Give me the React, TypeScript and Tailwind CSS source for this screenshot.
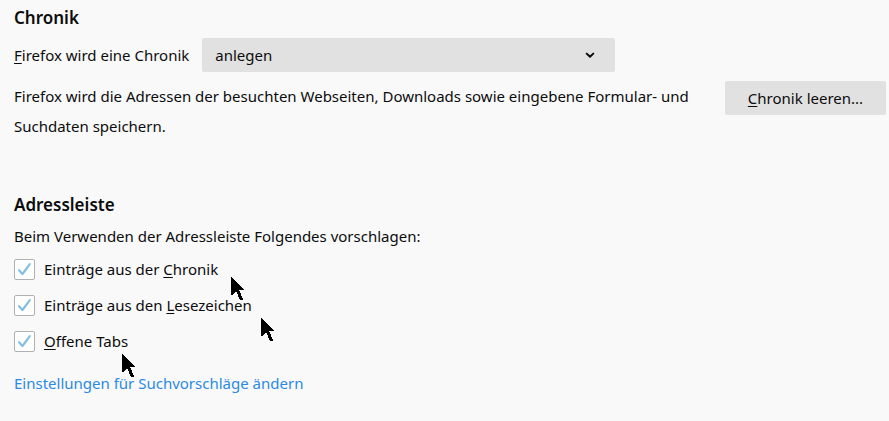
import React from "react";

const suggestions = [
  { id: "history", before: "Einträge aus der ", key: "C", after: "hronik" },
  { id: "bookmarks", before: "Einträge aus den ", key: "L", after: "esezeichen" },
  { id: "tabs", before: "", key: "O", after: "ffene Tabs" },
];

const pointerPlaces: Record<string, string> = {
  history: "left-[217px] top-[26px]",
  bookmarks: "left-[247px] top-[31px]",
  tabs: "left-[108px] top-[31px]",
};

const AccessKey: React.FC<{ children: string }> = ({ children }) => (
  <span className="underline decoration-1 underline-offset-2">{children}</span>
);

const Pointer: React.FC<{ className: string }> = ({ className }) => (
  <svg
    className={`absolute pointer-events-none ${className}`}
    width="14"
    height="24"
    viewBox="0 0 14 24"
    shapeRendering="crispEdges"
    aria-hidden="true"
  >
    <path d="M0 0L13 12V13H8L12 22V23H9L5 14L1 18H0Z" fill="#000" />
  </svg>
);

const App: React.FC = () => {
  return (
    <main className="min-h-screen bg-[#f9f9f9] pl-3.5 pr-[3px] pt-1 pb-5 font-['Noto_Sans','Open_Sans',sans-serif] text-[15px] leading-[30px] text-[#0c0c0d]">
      <section>
        <h2 className="text-[17px] leading-7 font-semibold">Chronik</h2>
        <div className="mt-1.5 flex items-center gap-[13px]">
          <label htmlFor="historyMode" className="whitespace-nowrap">
            <AccessKey>F</AccessKey>irefox wird eine Chronik
          </label>
          <div className="relative w-[413px]">
            <select
              id="historyMode"
              className="block h-[34px] w-full appearance-none rounded-xs bg-[#e1e1e1] px-[13px]"
            >
              <option>anlegen</option>
            </select>
            <svg
              className="pointer-events-none absolute right-5 top-3.5"
              width="10"
              height="7"
              viewBox="0 0 10 7"
              aria-hidden="true"
            >
              <path
                d="M1.7 1.6L5 4.8L8.3 1.6"
                fill="none"
                stroke="#0c0c0d"
                strokeWidth="2"
                strokeLinecap="round"
                strokeLinejoin="round"
              />
            </svg>
          </div>
        </div>
        <div className="mt-[9px] flex items-start gap-3">
          <p className="flex-1">
            Firefox wird die Adressen der besuchten Webseiten, Downloads sowie
            eingebene Formular- und Suchdaten speichern.
          </p>
          <button
            type="button"
            className="h-[34px] w-[161px] rounded-xs bg-[#e1e1e1] whitespace-nowrap"
          >
            <AccessKey>C</AccessKey>hronik leeren...
          </button>
        </div>
      </section>

      <section className="mt-[50px]">
        <h2 className="text-[17px] leading-7 font-semibold">Adressleiste</h2>
        <p className="mt-0.5">Beim Verwenden der Adressleiste Folgendes vorschlagen:</p>
        <ul>
          {suggestions.map(({ id, before, key, after }) => (
            <li key={id} className="relative flex h-9 items-center">
              <div className="relative">
                <input
                  id={id}
                  type="checkbox"
                  defaultChecked
                  className="peer block size-[21px] appearance-none rounded-xs border border-[#b1b1b1] bg-white"
                />
                <svg
                  className="pointer-events-none absolute inset-0 hidden peer-checked:block"
                  width="21"
                  height="21"
                  viewBox="0 0 21 21"
                  aria-hidden="true"
                >
                  <path
                    d="M5 11.2L8.5 15L15.8 5.2"
                    fill="none"
                    stroke="#85bfe0"
                    strokeWidth="2.2"
                    strokeLinecap="round"
                    strokeLinejoin="round"
                  />
                </svg>
              </div>
              <label htmlFor={id} className="pl-[9px]">
                {before}
                <AccessKey>{key}</AccessKey>
                {after}
              </label>
              <Pointer className={pointerPlaces[id]} />
            </li>
          ))}
        </ul>
        <p className="mt-[9px]">
          <a href="#search" className="text-[#2a8ae6]">
            Einstellungen für Suchvorschläge ändern
          </a>
        </p>
      </section>
    </main>
  );
};

export default App;
